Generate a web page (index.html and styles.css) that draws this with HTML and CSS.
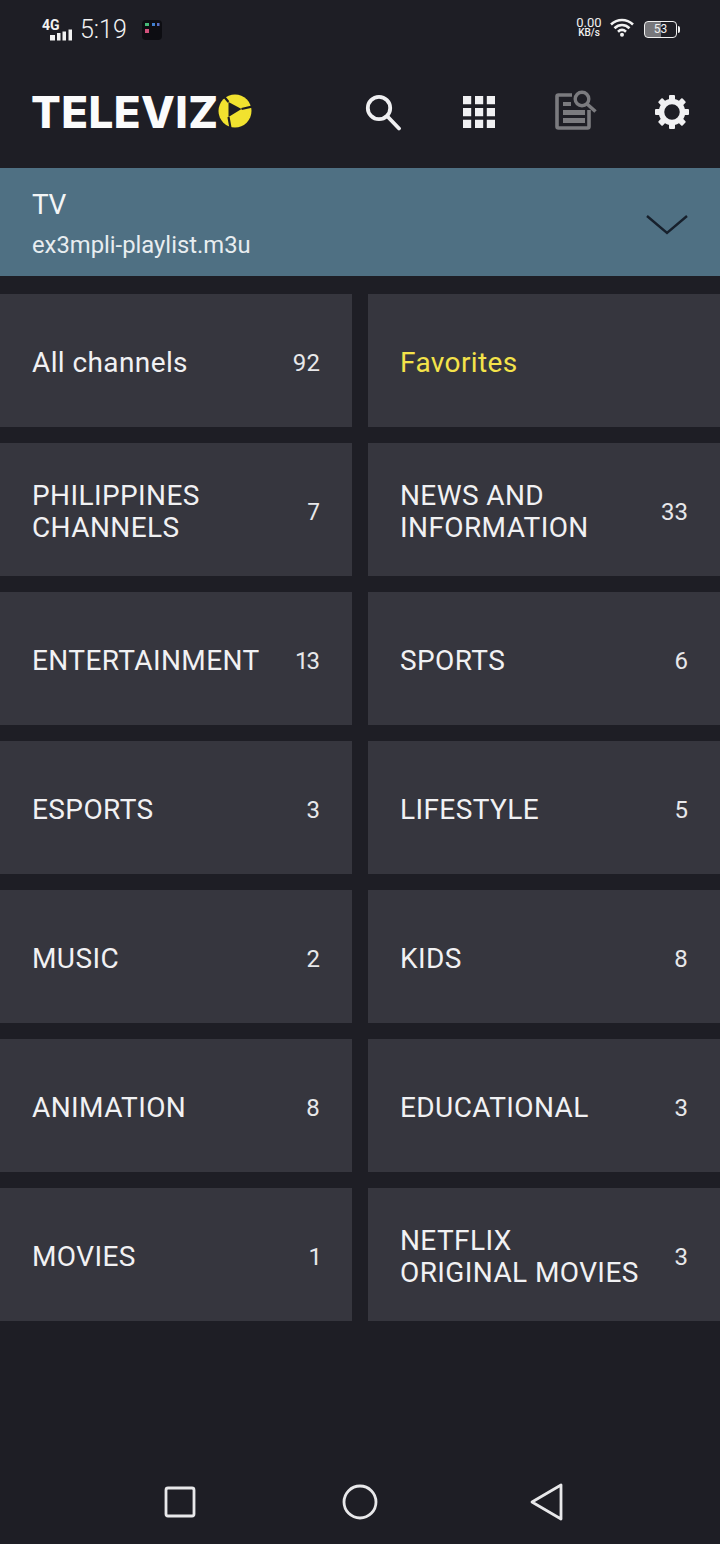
FILE: index.html
```html
<!DOCTYPE html>
<html lang="en">
<head>
<meta charset="utf-8">
<title>Televizo</title>
<link rel="stylesheet" href="styles.css">
</head>
<body>
<div class="app">
  <div class="status">
    <div class="status-left">
      <div class="net">
        <span class="net-label">4G</span>
        <svg class="signal" width="24" height="12" viewBox="0 0 24 12"><path d="M0 6h5v5.500H0zM7 4h3.500v7.500H7zM12.500 2.500H16v9h-3.500zM18.500 .5H22v11h-3.500z" fill="#f2f2f2"/></svg>
      </div>
      <span class="clock">5:19</span>
      <svg class="notif" width="20" height="20" viewBox="0 0 20 20"><rect width="20" height="20" rx="4" fill="#0d0d12"/><rect x="3" y="3" width="4" height="3" fill="#46b978"/><rect x="10" y="3" width="3" height="3" fill="#3f7fd0"/><rect x="15" y="3" width="2.500" height="3" fill="#5a6fc0"/><rect x="3" y="9" width="4" height="4" fill="#d0507a"/></svg>
    </div>
    <div class="status-right">
      <div class="speed"><span class="speed-num">0.00</span><span class="speed-unit">KB/s</span></div>
      <svg class="wifi" width="24" height="19" viewBox="0 0 24 19"><g fill="none" stroke="#f2f2f2" stroke-width="2.600"><path d="M1 6.500C7.500 .5 16.500 .5 23 6.500"/><path d="M4.500 10.200C9 6 15 6 19.500 10.200"/><path d="M8 13.800C10.500 11.500 13.500 11.500 16 13.800"/></g><circle cx="12" cy="16.800" r="2" fill="#f2f2f2"/></svg>
      <div class="battery">
        <div class="battery-body"><span class="battery-num">53</span></div>
        <span class="battery-cap"></span>
      </div>
    </div>
  </div>

  <header class="toolbar">
    <div class="logo">
      <span class="logo-text">TELEVIZ</span>
      <svg class="logo-mark" width="34" height="34" viewBox="0 0 34 34"><circle cx="17" cy="17" r="16.500" fill="#f1e22f"/><path d="M10.500 8V23L23.500 15z" fill="#1d1d24"/><path d="M10.500 8L6 2.500M23.500 15L34 12.500M10.500 23L12.500 34" fill="none" stroke="#1d1d24" stroke-width="2.200"/></svg>
    </div>
    <nav class="actions">
      <svg class="icon icon-search" width="36" height="37" viewBox="0 0 36 37"><circle cx="14" cy="14" r="11.200" fill="none" stroke="#f0f0f2" stroke-width="3.800"/><path d="M22.500 22.500L34 34.500" stroke="#f0f0f2" stroke-width="3.800" stroke-linecap="round"/></svg>
      <svg class="icon icon-apps" width="32" height="32" viewBox="0 0 32 32"><path d="M0 0h8.200v8.200H0zM12 0h8.200v8.200H12zM23.800 0H32v8.200h-8.200zM0 12h8.200v8.200H0zM12 12h8.200v8.200H12zM23.800 12H32v8.200h-8.200zM0 23.800h8.200V32H0zM12 23.800h8.200V32H12zM23.800 23.800H32V32h-8.200z" fill="#f0f0f2"/></svg>
      <svg class="icon icon-search-doc" width="42" height="40" viewBox="0 0 42 40"><path d="M17 5H3.500Q2 5 2 6.500V36.500Q2 38 3.500 38H32.500Q34 38 34 36.500V20" fill="none" stroke="#7b7b7f" stroke-width="3.600"/><path d="M8 12h8v4H8zM8 20h22v5H8zM8 28h22v5H8z" fill="#7b7b7f"/><circle cx="27" cy="9" r="6.800" fill="none" stroke="#7b7b7f" stroke-width="3.400"/><path d="M32 14L40.500 21.500" stroke="#7b7b7f" stroke-width="3.600"/></svg>
      <svg class="icon icon-gear" width="34" height="34" viewBox="0 0 34 34"><circle cx="17" cy="17" r="10.500" fill="none" stroke="#f0f0f2" stroke-width="5.500"/><g fill="#f0f0f2"><rect x="14" y="0" width="6" height="6" rx="1"/><rect x="14" y="0" width="6" height="6" rx="1" transform="rotate(45 17 17)"/><rect x="14" y="0" width="6" height="6" rx="1" transform="rotate(90 17 17)"/><rect x="14" y="0" width="6" height="6" rx="1" transform="rotate(135 17 17)"/><rect x="14" y="0" width="6" height="6" rx="1" transform="rotate(180 17 17)"/><rect x="14" y="0" width="6" height="6" rx="1" transform="rotate(225 17 17)"/><rect x="14" y="0" width="6" height="6" rx="1" transform="rotate(270 17 17)"/><rect x="14" y="0" width="6" height="6" rx="1" transform="rotate(315 17 17)"/></g></svg>
    </nav>
  </header>

  <section class="playlist">
    <div class="playlist-text">
      <div class="playlist-title">TV</div>
      <div class="playlist-name">ex3mpli-playlist.m3u</div>
    </div>
    <svg class="chevron" width="42" height="22" viewBox="0 0 42 22"><path d="M1 2L21 19 41 2" fill="none" stroke="#17202c" stroke-width="2.400"/></svg>
  </section>

  <main class="grid">
    <a class="tile"><span class="tile-name">All channels</span><span class="tile-count">92</span></a>
    <a class="tile"><span class="tile-name tile-fav">Favorites</span></a>
    <a class="tile"><span class="tile-name">PHILIPPINES<br>CHANNELS</span><span class="tile-count">7</span></a>
    <a class="tile"><span class="tile-name">NEWS AND<br>INFORMATION</span><span class="tile-count">33</span></a>
    <a class="tile"><span class="tile-name">ENTERTAINMENT</span><span class="tile-count">13</span></a>
    <a class="tile"><span class="tile-name">SPORTS</span><span class="tile-count">6</span></a>
    <a class="tile"><span class="tile-name">ESPORTS</span><span class="tile-count">3</span></a>
    <a class="tile"><span class="tile-name">LIFESTYLE</span><span class="tile-count">5</span></a>
    <a class="tile"><span class="tile-name">MUSIC</span><span class="tile-count">2</span></a>
    <a class="tile"><span class="tile-name">KIDS</span><span class="tile-count">8</span></a>
    <a class="tile"><span class="tile-name">ANIMATION</span><span class="tile-count">8</span></a>
    <a class="tile"><span class="tile-name">EDUCATIONAL</span><span class="tile-count">3</span></a>
    <a class="tile"><span class="tile-name">MOVIES</span><span class="tile-count">1</span></a>
    <a class="tile"><span class="tile-name">NETFLIX<br>ORIGINAL MOVIES</span><span class="tile-count">3</span></a>
  </main>

  <footer class="navbar">
    <svg class="nav-recent" width="32" height="32" viewBox="0 0 32 32"><rect x="2" y="2" width="28" height="28" rx="2" fill="none" stroke="#e8e8ea" stroke-width="2.800"/></svg>
    <svg class="nav-home" width="36" height="36" viewBox="0 0 36 36"><circle cx="18" cy="18" r="16" fill="none" stroke="#e8e8ea" stroke-width="2.800"/></svg>
    <svg class="nav-back" width="34" height="38" viewBox="0 0 34 38"><path d="M2 19L31 2V36z" fill="none" stroke="#e8e8ea" stroke-width="2.800" stroke-linejoin="round"/></svg>
  </footer>
</div>
</body>
</html>
```
FILE: styles.css
```css
* { box-sizing: border-box; }
html, body { margin: 0; padding: 0; }
body { background: #1e1e25; font-family: Roboto, "Liberation Sans", sans-serif; color: #f2f2f4; }
.app { width: 720px; height: 1544px; display: flex; flex-direction: column; overflow: hidden; }

.status { height: 56px; padding: 17px 40px 0 42px; display: flex; justify-content: space-between; align-items: flex-start; }
.status-left { display: flex; align-items: center; }
.net { width: 33px; height: 22px; display: flex; flex-direction: column; position: relative; }
.net-label { font-size: 14px; line-height: 12px; font-weight: 700; color: #f2f2f2; }
.signal { position: absolute; left: 8px; top: 10px; }
.clock { margin-left: 5px; font-size: 25px; line-height: 26px; font-weight: 300; color: #f2f2f2; }
.notif { margin-left: 15px; }
.status-right { display: flex; align-items: center; }
.speed { display: flex; flex-direction: column; align-items: center; width: 26px; color: #f0f0f0; }
.speed-num { font-size: 13px; line-height: 11px; }
.speed-unit { font-size: 10px; line-height: 10px; font-weight: 500; }
.wifi { margin-left: 8px; }
.battery { margin-left: 10px; display: flex; align-items: center; margin-top: 3px; }
.battery-body { width: 33px; height: 17px; border: 1.500px solid #f0f0f0; border-radius: 4px; background: linear-gradient(90deg, #77777b 0 53%, #1e1e25 53%); display: flex; align-items: center; justify-content: center; }
.battery-num { font-size: 12px; line-height: 14px; color: #f0f0f0; }
.battery-cap { width: 2px; height: 7px; background: #f0f0f0; border-radius: 0 2px 2px 0; margin-left: 1px; }

.toolbar { height: 112px; padding: 0 31px 0 31px; display: flex; align-items: center; justify-content: space-between; }
.logo { display: flex; align-items: center; margin-top: -1px; }
.logo-text { font-family: Inter, "Liberation Sans", sans-serif; font-weight: 800; font-size: 44px; line-height: 44px; color: #fbfbfb; letter-spacing: .4px; }
.logo-mark { margin-left: 0; margin-top: -1px; }
.actions { display: flex; align-items: center; }
.icon { display: block; }
.icon-apps { margin-left: 62px; }
.icon-search-doc { margin-left: 60px; margin-top: -4px; }
.icon-gear { margin-left: 58px; }

.playlist { height: 108px; background: #4f7083; padding: 3px 32px 0; display: flex; align-items: center; justify-content: space-between; }
.playlist-title { font-size: 28px; line-height: 34px; color: #f3f5f6; letter-spacing: -.5px; }
.playlist-name { font-size: 23.800px; line-height: 30px; margin-top: 8px; color: #e8edf0; }
.chevron { margin-top: 3px; }

.grid { margin-top: 18px; display: grid; grid-template-columns: 352px 352px; grid-auto-rows: 133px; column-gap: 16px; row-gap: 16px; }
.tile { background: #36363e; padding: 4px 32px 0; display: flex; align-items: center; justify-content: space-between; }
.tile-name { font-size: 28px; line-height: 32px; color: #f1f1f3; letter-spacing: .4px; }
.tile-fav { color: #f4e34a; }
.tile-count { font-size: 24px; line-height: 30px; color: #e8e8ea; font-variant-numeric: proportional-nums; }

.navbar { margin-top: auto; height: 84px; padding-left: 164px; display: flex; align-items: center; }
.nav-recent, .nav-home, .nav-back { display: block; }
.nav-home { margin-left: 146px; }
.nav-back { margin-left: 152px; }
```
